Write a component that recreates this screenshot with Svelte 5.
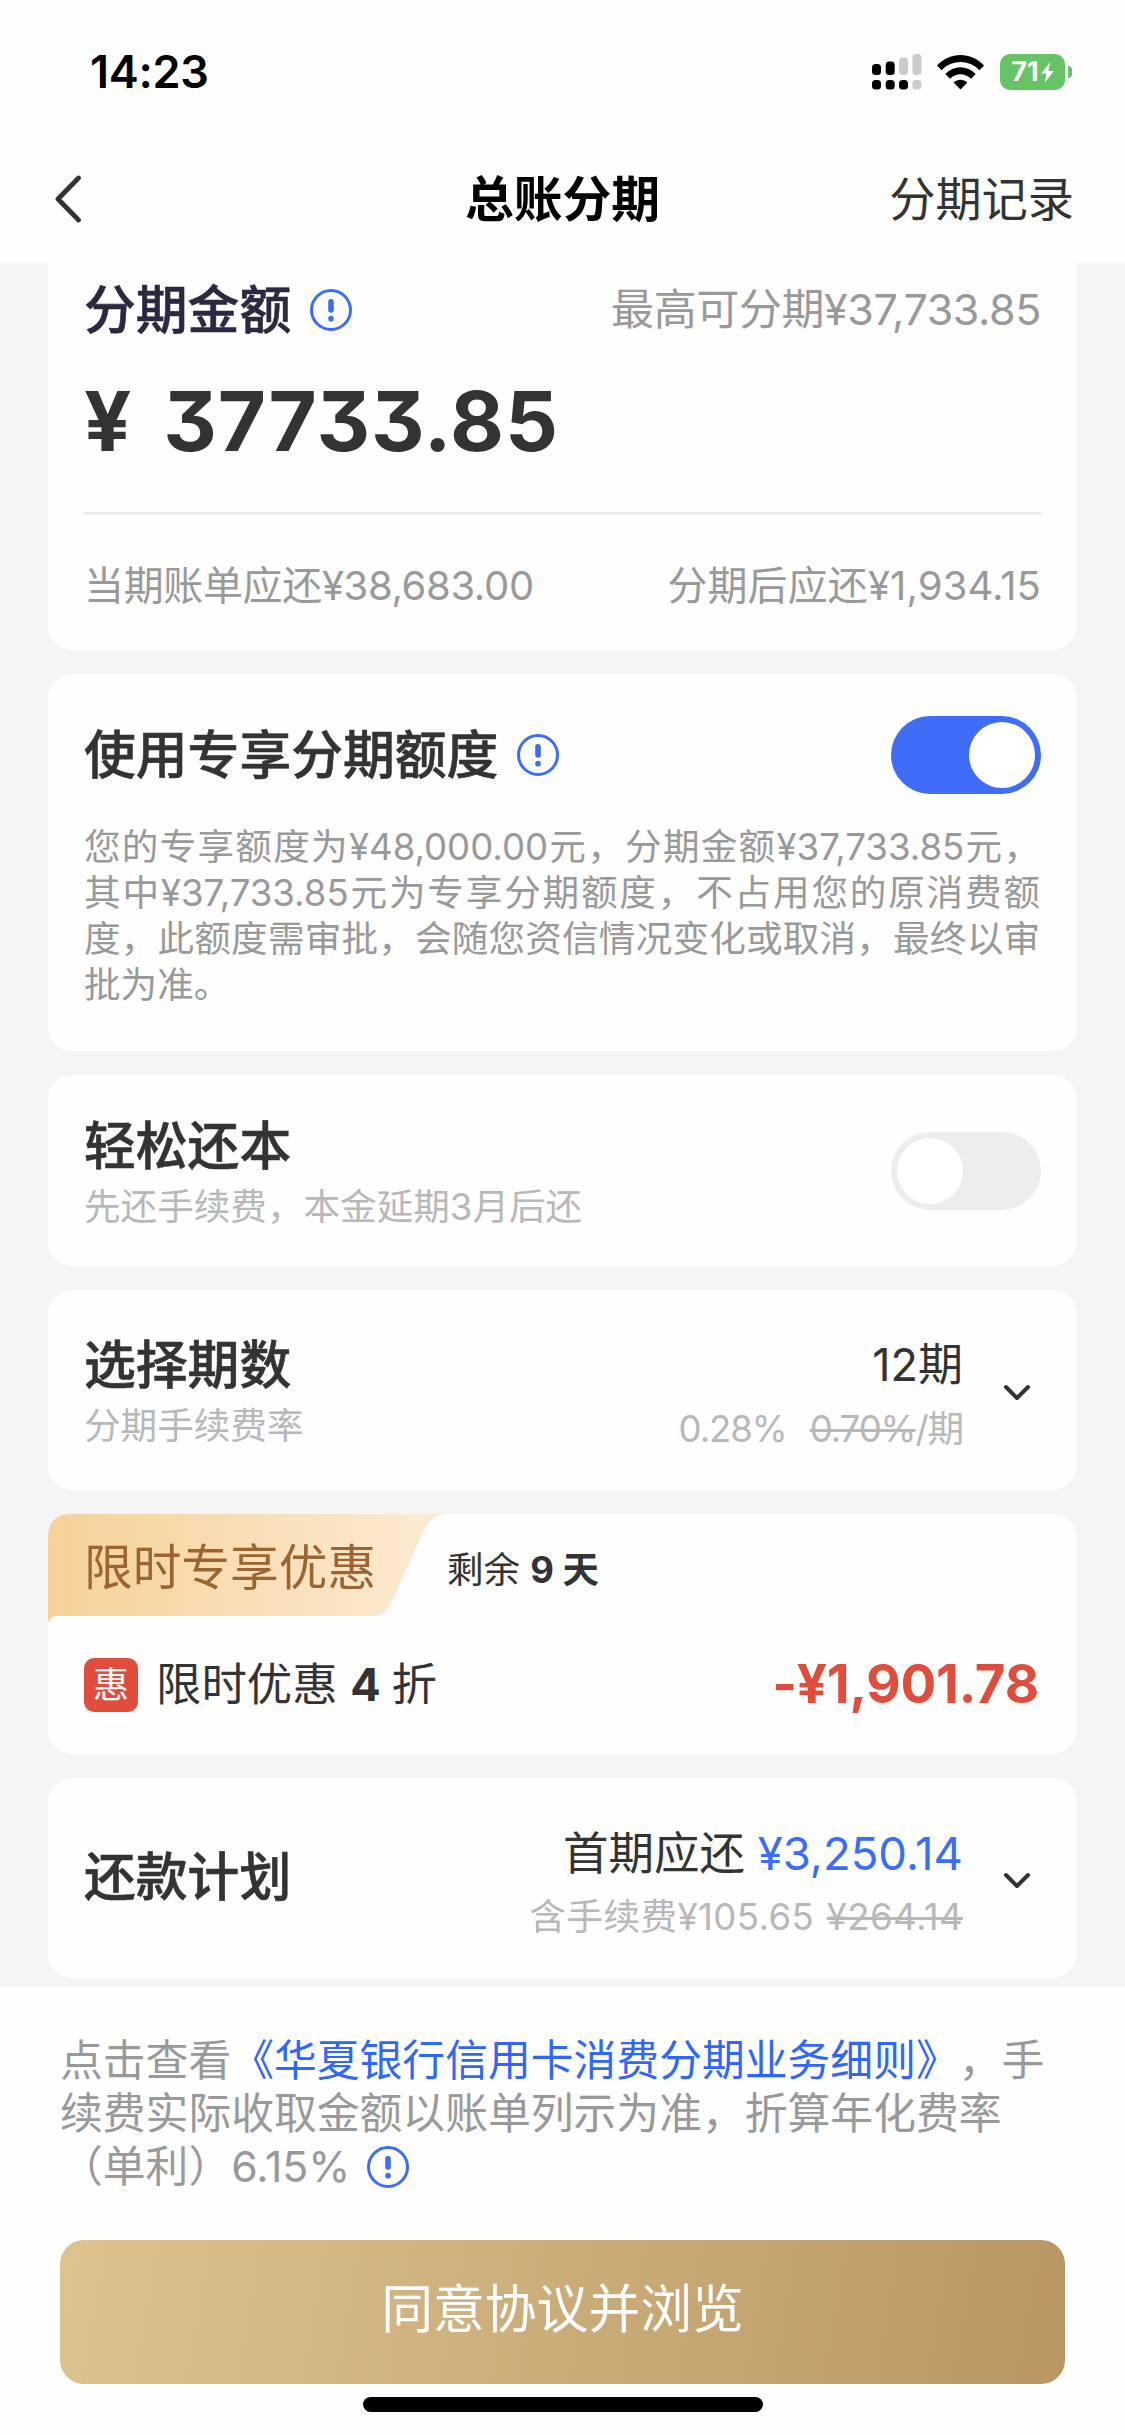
<script>
  let exclusive = $state(true);
  let easy = $state(false);

  const notice = [
    '您的专享额度为¥48,000.00元，分期金额¥37,733.85元，',
    '其中¥37,733.85元为专享分期额度，不占用您的原消费额',
    '度，此额度需审批，会随您资信情况变化或取消，最终以审',
    '批为准。'
  ];
</script>

{#snippet info()}
  <svg class="info" viewBox="0 0 42 42">
    <circle cx="21" cy="21" r="19.5" />
    <path d="M21 12.800v8.200" />
    <path d="M21 29.600v.1" />
  </svg>
{/snippet}

{#snippet chevron()}
  <svg class="chevron" viewBox="0 0 28 18"><path d="M3 3l11 11L25 3" /></svg>
{/snippet}

<div class="screen">
  <div class="status">
    <span class="time">14:23</span>
    <div class="indicators">
      <svg class="signal" viewBox="0 0 50 36">
        <g fill="#000">
          <rect x="0" y="10" width="9" height="11" rx="3.5" />
          <rect x="13.7" y="7.5" width="9" height="13.5" rx="3.5" />
          <rect x="0" y="26" width="9" height="9.5" rx="3.5" />
          <rect x="13.7" y="26" width="9" height="9.5" rx="3.5" />
          <rect x="27" y="26" width="9" height="9.5" rx="3.5" />
        </g>
        <g fill="#cbcbcb">
          <rect x="27" y="3.5" width="9" height="17.5" rx="3.5" />
          <rect x="40.4" y="0" width="9" height="21" rx="3.5" />
          <rect x="40.4" y="26" width="9" height="9.5" rx="3.5" />
        </g>
      </svg>
      <svg class="wifi" viewBox="0 0 47 35">
        <path d="M0 10.5C13-3.5 34-3.5 47 10.5L42.4 15.2C32 4.3 15 4.3 4.6 15.2Z" />
        <path d="M8.3 19C17 10 30 10 38.7 19L34 23.8C28 17.6 19 17.6 13 23.8Z" />
        <path d="M16.6 27.5C20.5 23.7 26.5 23.7 30.4 27.5L23.5 34.6Z" />
      </svg>
      <div class="battery">
        <div class="cell">
          <span>71</span>
          <svg viewBox="0 0 12 20"><path d="M8.6 0L0 11h5L3.2 20 12 8.6H6.8Z" /></svg>
        </div>
        <i></i>
      </div>
    </div>
  </div>

  <header>
    <svg class="back" viewBox="0 0 28 48"><path d="M24.5 3L4 24l20.5 21" /></svg>
    <h1>总账分期</h1>
    <span class="record">分期记录</span>
  </header>

  <main>
    <section class="card amount-card">
      <div class="row top">
        <div class="titled"><h2 class="ink">分期金额</h2>{@render info()}</div>
        <span class="max">最高可分期¥37,733.85</span>
      </div>
      <div class="amount"><span>¥</span><span>37733.85</span></div>
      <div class="row bottom">
        <span class="before">当期账单应还¥38,683.00</span>
        <span class="after">分期后应还¥1,934.15</span>
      </div>
    </section>

    <section class="card quota">
      <div class="row">
        <div class="titled"><h2>使用专享分期额度</h2>{@render info()}</div>
        <button class="toggle" class:on={exclusive} aria-label="使用专享分期额度" onclick={() => (exclusive = !exclusive)}><i></i></button>
      </div>
      <div class="notice">
        {#each notice as line}<p>{line}</p>{/each}
      </div>
    </section>

    <section class="card easy">
      <div class="col">
        <h2>轻松还本</h2>
        <span class="hint">先还手续费，本金延期3月后还</span>
      </div>
      <button class="toggle" class:on={easy} aria-label="轻松还本" onclick={() => (easy = !easy)}><i></i></button>
    </section>

    <section class="card pick">
      <div class="col">
        <h2>选择期数</h2>
        <span class="hint">分期手续费率</span>
      </div>
      <div class="value">
        <span class="main term">12期</span>
        <span class="hint rate"><span>0.28%</span><span><s>0.70%</s>/期</span></span>
      </div>
      {@render chevron()}
    </section>

    <section class="card promo">
      <div class="banner">
        <svg class="ribbon" viewBox="0 0 396 110">
          <defs>
            <linearGradient id="gold" x1="0" x2="1" y1="0" y2="0">
              <stop offset="0" stop-color="#f6d199" />
              <stop offset="1" stop-color="#fcebd3" />
            </linearGradient>
          </defs>
          <path fill="url(#gold)" d="M0 24Q0 0 24 0H396Q381 2 375 18L344 87Q338 102 323 102H10Q1 102 0 110Z" />
        </svg>
        <span class="ribbon-text">限时专享优惠</span>
        <span class="left-days">剩余 <b>9 天</b></span>
      </div>
      <div class="row deal">
        <div class="deal-name">
          <span class="badge">惠</span>
          <span class="off">限时优惠 <b>4</b> 折</span>
        </div>
        <b class="minus">-¥1,901.78</b>
      </div>
    </section>

    <section class="card pick plan">
      <h2>还款计划</h2>
      <div class="value">
        <span class="main">首期应还 <em>¥3,250.14</em></span>
        <span class="hint fee">含手续费¥105.65 <s>¥264.14</s></span>
      </div>
      {@render chevron()}
    </section>
  </main>

  <footer>
    <div class="terms">
      <p>点击查看<a href="#terms">《华夏银行信用卡消费分期业务细则》</a>，手</p>
      <p>续费实际收取金额以账单列示为准，折算年化费率</p>
      <p class="last"><span>（单利）6.15%</span>{@render info()}</p>
    </div>
    <button class="agree">同意协议并浏览</button>
    <div class="home"></div>
  </footer>
</div>

<style>
  :global(body) {
    margin: 0;
    background: #fff;
  }
  .screen {
    width: 1125px;
    height: 2435px;
    overflow: hidden;
    display: flex;
    flex-direction: column;
    background: #fefefe;
    color: #333;
    font-family: Inter, 'Noto Sans CJK SC', sans-serif;
    line-height: 1.2;
    text-spacing-trim: space-all;
    white-space: nowrap;
  }
  h1, h2, p {
    margin: 0;
    font-weight: 500;
  }
  button {
    border: 0;
    padding: 0;
    font: inherit;
  }
  svg {
    display: block;
    flex: none;
  }

  .status {
    height: 144px;
    flex: none;
    box-sizing: border-box;
    padding: 0 53px 0 90px;
    display: flex;
    justify-content: space-between;
    align-items: center;
    color: #000;
  }
  .time {
    padding-bottom: 1px;
    font-size: 45px;
    font-weight: 600;
    letter-spacing: -0.3px;
  }
  .indicators {
    display: flex;
    align-items: center;
  }
  .signal {
    width: 50px;
    height: 36px;
    margin-right: 15px;
  }
  .wifi {
    width: 47px;
    height: 35px;
    margin-right: 16px;
  }
  .battery {
    display: flex;
    align-items: center;
    gap: 3px;
  }
  .cell {
    width: 65px;
    height: 36px;
    border-radius: 10px;
    background: #66c466;
    color: #fff;
    display: flex;
    align-items: center;
    justify-content: center;
    gap: 2px;
    font-size: 27px;
    font-weight: 700;
  }
  .cell svg {
    width: 13px;
    height: 21px;
    fill: #fff;
  }
  .battery i {
    width: 4px;
    height: 12px;
    border-radius: 0 5px 5px 0;
    background: #66c466;
  }

  header {
    height: 119px;
    flex: none;
    box-sizing: border-box;
    padding: 0 51px 9px 54px;
    display: grid;
    grid-template-columns: 1fr auto 1fr;
    align-items: center;
  }
  .back {
    width: 28px;
    height: 48px;
    fill: none;
    stroke: #333;
    stroke-width: 4.8;
    stroke-linecap: round;
    stroke-linejoin: round;
  }
  h1 {
    padding-right: 3px;
    padding-top: 2px;
    font-size: 48.8px;
    font-weight: 700;
    color: #000;
  }
  .record {
    justify-self: end;
    font-size: 46.2px;
    line-height: 60px;
  }

  main {
    height: 1724px;
    flex: none;
    box-sizing: border-box;
    padding: 0 48px;
    background: #f5f5f5;
    display: flex;
    flex-direction: column;
    gap: 24px;
  }
  .card {
    flex: none;
    box-sizing: border-box;
    padding: 0 36px;
    border-radius: 24px;
    background: #fefefe;
  }
  .row {
    display: flex;
    align-items: center;
    justify-content: space-between;
  }
  .titled {
    display: flex;
    align-items: center;
    gap: 19px;
  }
  h2 {
    font-size: 51.8px;
    line-height: 60px;
    -webkit-text-stroke: 0.6px currentColor;
  }
  .ink {
    color: #2b2840;
  }
  .info {
    width: 42px;
    height: 42px;
    fill: none;
    stroke: #3c6df8;
    stroke-width: 3;
    stroke-linecap: round;
  }
  .info path {
    stroke-width: 5.6;
  }

  .amount-card {
    height: 387px;
    border-radius: 0 0 24px 24px;
  }
  .top {
    height: 94px;
  }
  .max {
    font-size: 43px;
    color: #999;
    letter-spacing: -0.4px;
  }
  .amount {
    height: 158px;
    box-sizing: border-box;
    padding-bottom: 26px;
    border-bottom: 3px solid #ebebeb;
    display: flex;
    align-items: center;
    gap: 31px;
    font-size: 83px;
    font-weight: 700;
    letter-spacing: 0.9px;
    font-feature-settings: 'cv09';
  }
  .bottom {
    height: 135px;
    box-sizing: border-box;
    padding-top: 7px;
    font-size: 40px;
    color: #999;
  }
  .before {
    letter-spacing: -0.35px;
  }
  .after {
    letter-spacing: 0.1px;
  }

  .quota {
    height: 377px;
    padding-top: 13px;
  }
  .quota .row {
    height: 135px;
    margin-bottom: 2px;
  }
  .notice p {
    width: 956px;
    font-size: 36.6px;
    line-height: 46px;
    font-weight: 400;
    color: #999;
    text-align-last: justify;
  }
  .notice p:last-child {
    text-align-last: left;
  }
  .toggle {
    width: 150px;
    height: 78px;
    box-sizing: border-box;
    padding: 6px;
    border-radius: 39px;
    background: #ededed;
    display: flex;
    align-items: center;
  }
  .toggle i {
    width: 66px;
    height: 66px;
    border-radius: 50%;
    background: #fff;
  }
  .toggle.on {
    background: #3f6df7;
    justify-content: flex-end;
  }

  .easy {
    height: 191px;
    display: flex;
    align-items: center;
    justify-content: space-between;
  }
  .col {
    display: flex;
    flex-direction: column;
    gap: 9px;
    padding-top: 3px;
  }
  .hint {
    font-size: 36.6px;
    line-height: 44px;
    color: #b8b8b8;
  }
  .pick {
    height: 200px;
    padding-right: 46px;
    display: flex;
    align-items: center;
  }
  .plan h2 {
    padding-bottom: 3px;
  }
  .value {
    margin-left: auto;
    margin-right: 40px;
    padding-top: 6px;
    display: flex;
    flex-direction: column;
    align-items: flex-end;
    gap: 11px;
  }
  .main {
    font-size: 45.5px;
    line-height: 60px;
  }
  .term {
    font-size: 45px;
  }
  .rate {
    display: flex;
    gap: 23px;
    letter-spacing: -1.1px;
    padding-top: 1px;
  }
  .fee {
    letter-spacing: 0.4px;
    word-spacing: 2px;
  }
  .main em {
    font-style: normal;
    color: #3c6df8;
  }
  .chevron {
    width: 28px;
    height: 18px;
    padding-top: 5px;
    fill: none;
    stroke: #333;
    stroke-width: 4;
    stroke-linecap: round;
    stroke-linejoin: round;
  }

  .promo {
    height: 240px;
    position: relative;
  }
  .banner {
    height: 102px;
    display: flex;
    align-items: center;
  }
  .ribbon {
    position: absolute;
    left: 0;
    top: 0;
    width: 396px;
    height: 110px;
  }
  .ribbon-text {
    position: relative;
    width: 363px;
    padding-top: 6px;
    font-size: 48.7px;
    color: #9b6532;
  }
  .left-days {
    font-size: 36.5px;
    padding-top: 11px;
  }
  .deal {
    height: 138px;
  }
  .deal-name {
    display: flex;
    align-items: center;
    gap: 18px;
    font-size: 45.4px;
  }
  .off b {
    font-size: 45px;
    letter-spacing: -2px;
  }
  .badge {
    width: 54px;
    height: 54px;
    border-radius: 10px;
    background: #e04d3d;
    color: #fff;
    font-size: 36px;
    line-height: 54px;
    text-align: center;
  }
  .minus {
    padding-right: 2px;
    font-size: 53px;
    letter-spacing: -0.2px;
    color: #e04d3d;
  }

  footer {
    flex: 1;
    padding: 48px 60px 0;
    display: flex;
    flex-direction: column;
  }
  .terms {
    height: 205px;
    font-size: 42.8px;
    color: #999;
  }
  .terms p {
    font-weight: 400;
    line-height: 52.5px;
  }
  .terms a {
    color: #3067fa;
    text-decoration: none;
  }
  .terms .last {
    display: flex;
    align-items: center;
    gap: 17px;
    padding-top: 1px;
  }
  .agree {
    height: 144px;
    box-sizing: border-box;
    padding-bottom: 5px;
    border-radius: 24px;
    background: linear-gradient(100deg, #dcc390, #b99663);
    color: #fff;
    font-size: 51.8px;
  }
  .home {
    width: 400px;
    height: 15px;
    border-radius: 8px;
    margin: 13px auto 0;
    background: #000;
  }
</style>
